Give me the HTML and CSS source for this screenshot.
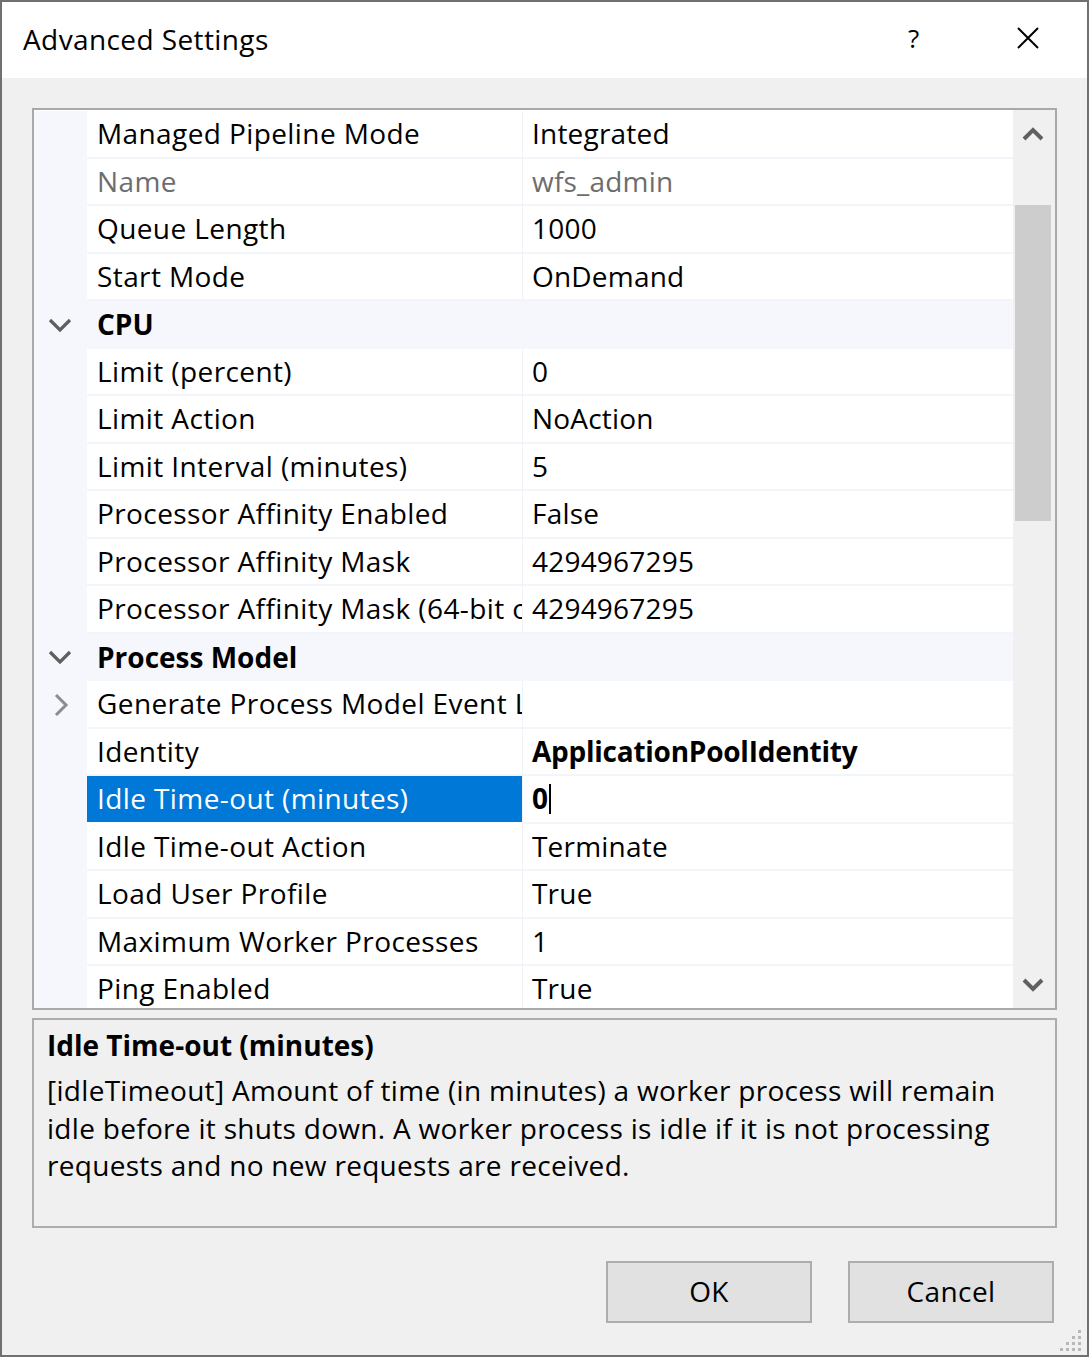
FILE: index.html
```html
<!DOCTYPE html>
<html>
<head>
<meta charset="utf-8">
<link rel="stylesheet" href="styles.css">
</head>
<body>
<div class="window">
  <div class="titlebar">
    <div class="title">Advanced Settings</div>
    <div class="help">?</div>
    <div class="close">
      <svg width="22" height="22" viewBox="0 0 22 22"><path d="M1 1 L21 21 M21 1 L1 21" stroke="#000" stroke-width="2" fill="none"/></svg>
    </div>
  </div>
  <div class="content">
    <div class="grid">
      <div class="rows">
        <div class="row"><div class="gut"></div><div class="name">Managed Pipeline Mode</div><div class="val">Integrated</div></div>
        <div class="row ro"><div class="gut"></div><div class="name">Name</div><div class="val">wfs_admin</div></div>
        <div class="row"><div class="gut"></div><div class="name">Queue Length</div><div class="val">1000</div></div>
        <div class="row"><div class="gut"></div><div class="name">Start Mode</div><div class="val">OnDemand</div></div>
        <div class="row cat"><div class="gut"><svg class="chev" width="24" height="16" viewBox="0 0 24 16"><path d="M2 3 L12 13 L22 3" stroke="#5f5f5f" stroke-width="3.2" fill="none"/></svg></div><div class="catname">CPU</div></div>
        <div class="row"><div class="gut"></div><div class="name">Limit (percent)</div><div class="val">0</div></div>
        <div class="row"><div class="gut"></div><div class="name">Limit Action</div><div class="val">NoAction</div></div>
        <div class="row"><div class="gut"></div><div class="name">Limit Interval (minutes)</div><div class="val">5</div></div>
        <div class="row"><div class="gut"></div><div class="name">Processor Affinity Enabled</div><div class="val">False</div></div>
        <div class="row"><div class="gut"></div><div class="name">Processor Affinity Mask</div><div class="val">4294967295</div></div>
        <div class="row"><div class="gut"></div><div class="name">Processor Affinity Mask (64-bit option)</div><div class="val">4294967295</div></div>
        <div class="row cat"><div class="gut"><svg class="chev" width="24" height="16" viewBox="0 0 24 16"><path d="M2 3 L12 13 L22 3" stroke="#5f5f5f" stroke-width="3.2" fill="none"/></svg></div><div class="catname">Process Model</div></div>
        <div class="row"><div class="gut"><svg class="chevr" width="16" height="24" viewBox="0 0 16 24"><path d="M3 2 L13 12 L3 22" stroke="#8c8c8c" stroke-width="3" fill="none"/></svg></div><div class="name">Generate Process Model Event Log Entry</div><div class="val"></div></div>
        <div class="row"><div class="gut"></div><div class="name">Identity</div><div class="val bold">ApplicationPoolIdentity</div></div>
        <div class="row"><div class="gut"></div><div class="name sel">Idle Time-out (minutes)</div><div class="val edit bold">0<span class="caret"></span></div></div>
        <div class="row"><div class="gut"></div><div class="name">Idle Time-out Action</div><div class="val">Terminate</div></div>
        <div class="row"><div class="gut"></div><div class="name">Load User Profile</div><div class="val">True</div></div>
        <div class="row"><div class="gut"></div><div class="name">Maximum Worker Processes</div><div class="val">1</div></div>
        <div class="row"><div class="gut"></div><div class="name">Ping Enabled</div><div class="val">True</div></div>
      </div>
      <div class="scrollbar">
        <div class="arrow"><svg width="22" height="16" viewBox="0 0 22 16"><path d="M2 13 L11 4 L20 13" stroke="#606060" stroke-width="4" fill="none"/></svg></div>
        <div class="track"><div class="thumb"></div></div>
        <div class="arrow"><svg width="22" height="16" viewBox="0 0 22 16"><path d="M2 3 L11 12 L20 3" stroke="#606060" stroke-width="4" fill="none"/></svg></div>
      </div>
    </div>
    <div class="desc">
      <div class="desc-title">Idle Time-out (minutes)</div>
      <div class="desc-text">[idleTimeout] Amount of time (in minutes) a worker process will remain idle before it shuts down. A worker process is idle if it is not processing requests and no new requests are received.</div>
    </div>
    <div class="buttons">
      <div class="btn">OK</div>
      <div class="btn">Cancel</div>
    </div>
  </div>
  <svg class="grip" width="24" height="24" viewBox="0 0 24 24">
    <rect x="19" y="3" width="3" height="3" fill="#b8b8b8"/>
    <rect x="13" y="9" width="3" height="3" fill="#b8b8b8"/>
    <rect x="19" y="9" width="3" height="3" fill="#b8b8b8"/>
    <rect x="7" y="15" width="3" height="3" fill="#b8b8b8"/>
    <rect x="13" y="15" width="3" height="3" fill="#b8b8b8"/>
    <rect x="19" y="15" width="3" height="3" fill="#b8b8b8"/>
    <rect x="1" y="21" width="3" height="3" fill="#b8b8b8"/>
    <rect x="7" y="21" width="3" height="3" fill="#b8b8b8"/>
    <rect x="13" y="21" width="3" height="3" fill="#b8b8b8"/>
    <rect x="19" y="21" width="3" height="3" fill="#b8b8b8"/>
  </svg>
</div>
</body>
</html>
```
FILE: styles.css
```css
* { box-sizing: border-box; }
html, body { margin: 0; padding: 0; }
body {
  width: 1089px;
  height: 1357px;
  font-family: "Open Sans", "Noto Sans", sans-serif;
  font-size: 28px;
  letter-spacing: 0.4px;
  color: #000;
  overflow: hidden;
}
.window {
  position: relative;
  width: 1089px;
  height: 1357px;
  border: 2px solid #707070;
  background: #f0f0f0;
}
.titlebar {
  height: 76px;
  background: #fff;
  display: flex;
  align-items: center;
  padding-left: 21px;
}
.title {
  flex: 1;
  font-size: 28px;
  padding-bottom: 2px;
}
.help {
  width: 22px;
  font-size: 26px;
  margin-right: 87px;
  padding-bottom: 4px;
}
.close {
  width: 22px;
  height: 22px;
  margin-right: 48px;
  margin-bottom: 4px;
}
.close svg { display: block; }
.content {
  padding: 30px 30px 0 30px;
}
.grid {
  height: 902px;
  border: 2px solid #a9a9a9;
  background: #fff;
  display: flex;
  overflow: hidden;
}
.rows {
  flex: 1;
  overflow: hidden;
  padding-top: 1px;
}
.row {
  display: grid;
  grid-template-columns: 53px 436px 1fr;
  height: 47.5px;
}
.gut {
  background: #f5f7fc;
  display: flex;
  align-items: center;
  justify-content: center;
}
.chev { margin-left: -2px; }
.chevr { margin-left: 0; }
.name, .val {
  border-bottom: 2px solid #f2f5fa;
  white-space: nowrap;
  overflow: hidden;
  line-height: 45px;
}
.name {
  padding-left: 10px;
  border-right: 1px solid #f0f2f7;
}
.val { padding-left: 9px; letter-spacing: 0.2px; }
.ro .name, .ro .val { color: #6d6d6d; }
.val.bold, .bold { font-weight: 700; letter-spacing: -0.25px; }
.name.sel {
  background: #0078d7;
  color: #fff;
  border-bottom-color: #fff;
}
.edit { display: flex; align-items: center; }
.caret {
  display: inline-block;
  width: 2px;
  height: 30px;
  background: #000;
  margin-left: 1px;
}
.cat { background: #f5f7fc; }
.catname {
  grid-column: 2 / 4;
  font-weight: 700;
  letter-spacing: 0;
  padding-left: 10px;
  line-height: 47px;
}
.scrollbar {
  width: 42px;
  background: #f0f0f0;
  display: flex;
  flex-direction: column;
}
.arrow {
  height: 47px;
  display: flex;
  align-items: center;
  justify-content: center;
  padding-right: 2px;
}
.arrow svg { display: block; }
.track {
  flex: 1;
  padding: 48px 4px 0 2px;
}
.thumb {
  height: 316px;
  background: #cdcdcd;
}
.desc {
  margin-top: 8px;
  height: 210px;
  border: 2px solid #adadad;
  padding: 7px 13px 0 13px;
}
.desc-title {
  font-weight: 700;
  letter-spacing: 0;
  line-height: 36px;
}
.desc-text {
  line-height: 37.5px;
  margin-top: 9px;
  letter-spacing: 0.3px;
}
.buttons {
  display: flex;
  justify-content: flex-end;
  gap: 36px;
  margin-top: 33px;
  padding-right: 3px;
}
.btn {
  width: 206px;
  height: 62px;
  background: #e1e1e1;
  border: 2px solid #adadad;
  display: flex;
  align-items: center;
  justify-content: center;
  padding-bottom: 2px;
}
.grip {
  position: absolute;
  right: 4px;
  bottom: 4px;
}
```
